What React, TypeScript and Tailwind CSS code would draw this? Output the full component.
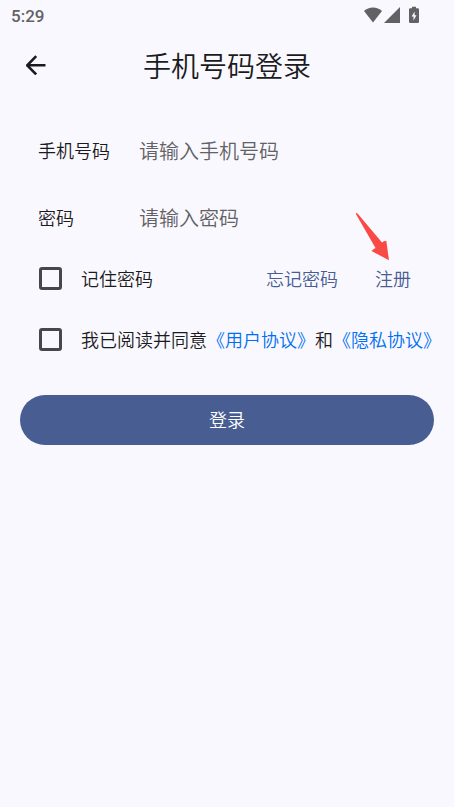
import { useState } from "react";

interface Champ {
  id: string;
  label: string;
  placeholder: string;
  type: string;
}

const CHAMPS: Champ[] = [
  { id: "phone", label: "手机号码", placeholder: "请输入手机号码", type: "tel" },
  { id: "password", label: "密码", placeholder: "请输入密码", type: "password" },
];

const CHECKBOX =
  "appearance-none size-[23px] shrink-0 rounded-[3px] border-3 border-[#46464f] checked:bg-[#485d92] checked:border-[#485d92]";

function StatusBar() {
  return (
    <div className="flex h-8 items-center justify-between pl-[11px] pr-[35px] text-[#626264]">
      <span className="font-[Roboto] text-[17px] leading-6 font-medium">5:29</span>
      <div className="flex items-center pb-0.5">
        <svg className="h-4 w-[18px]" viewBox="0 0 18 16" fill="currentColor" aria-hidden="true">
          <path d="M0 4C2.400 1.700 5.500 0.500 9 0.500s6.600 1.200 9 3.500L9 15.600z" />
        </svg>
        <svg className="ml-0.5 h-4 w-4" viewBox="0 0 16 16" fill="currentColor" aria-hidden="true">
          <path d="M16 0v16H0z" />
        </svg>
        <svg className="ml-[9px] h-[18px] w-[10px]" viewBox="0 0 10 18" fill="currentColor" aria-hidden="true">
          <path
            fillRule="evenodd"
            d="M3 0.700h4V2.200h1.800A1.200 1.200 0 0 1 10 3.400v12.400A1.200 1.200 0 0 1 8.800 17H1.200A1.200 1.200 0 0 1 0 15.800V3.400A1.200 1.200 0 0 1 1.200 2.200H3zM5.600 5.500L2.600 10.500h1.900v4L7.500 9.200H5.600z"
          />
        </svg>
      </div>
    </div>
  );
}

export default function App() {
  const [remember, setRemember] = useState(false);
  const [agreed, setAgreed] = useState(false);

  return (
    <div className="min-h-screen bg-[#faf8ff] font-['Noto_Sans_CJK_SC',sans-serif] text-lg leading-6 font-[350] text-[#1a1b21]">
      <StatusBar />

      {/* Header */}
      <header className="grid h-[66px] grid-cols-[48px_1fr_48px] items-center px-3">
        <button type="button" aria-label="返回" className="flex size-12 items-center justify-center">
          <svg className="size-5" viewBox="0 0 20 20" fill="none" stroke="currentColor" strokeWidth="2.6" aria-hidden="true">
            <path d="M10.200 1.200L1.200 10.300l9 9.100M1.200 10.300H19.500" />
          </svg>
        </button>
        <h1 className="text-center text-[28px] leading-10">手机号码登录</h1>
      </header>

      <form className="pt-5" onSubmit={(e) => e.preventDefault()}>
        <div className="flex flex-col gap-[3px] pl-[38px] pr-5">
          {CHAMPS.map((c) => (
            <div key={c.id} className="flex h-16 items-center">
              <label htmlFor={c.id} className="w-[101px] shrink-0">
                {c.label}
              </label>
              <input
                id={c.id}
                type={c.type}
                placeholder={c.placeholder}
                className="h-12 min-w-0 flex-1 bg-transparent text-xl outline-none placeholder:text-[#626264]"
              />
            </div>
          ))}
        </div>

        <div className="flex flex-col gap-1 pt-px pl-[39px]">
          <div className="flex h-[57px] items-center pr-[43px]">
            <label className="flex items-center gap-[19px]">
              <input
                type="checkbox"
                className={CHECKBOX}
                checked={remember}
                onChange={(e) => setRemember(e.target.checked)}
              />
              <span className="pb-0.5">记住密码</span>
            </label>
            <div className="ml-auto flex gap-[37px] pb-0.5 text-[#485d92]">
              <a href="#forgot">忘记密码</a>
              <a href="#register" className="relative">
                注册
                {/* Flèche vers l'inscription */}
                <svg
                  className="absolute right-5 bottom-full mb-1 h-[50px] w-9"
                  viewBox="0 0 36 50"
                  fill="#f94b46"
                  aria-hidden="true"
                >
                  <path d="M0.900 2Q0.700 1 1.800 1L3 2L27 30.500Q28.500 29 31.300 28.700L34 48.300L16.500 39Q18.500 36.800 20.500 36Z" />
                </svg>
              </a>
            </div>
          </div>

          <div className="flex h-[57px] items-center gap-[19px]">
            <input
              id="agree"
              type="checkbox"
              className={CHECKBOX}
              checked={agreed}
              onChange={(e) => setAgreed(e.target.checked)}
            />
            <label htmlFor="agree" className="pb-0.5 whitespace-nowrap">
              我已阅读并同意
              <a href="#terms" className="text-[#0070f0]">《用户协议》</a>
              和
              <a href="#privacy" className="text-[#0070f0]">《隐私协议》</a>
            </label>
          </div>
        </div>

        <div className="px-5 pt-[27px]">
          <button type="submit" className="h-[50px] w-full rounded-full bg-[#485d92] pb-0.5 text-white">
            登录
          </button>
        </div>
      </form>
    </div>
  );
}
